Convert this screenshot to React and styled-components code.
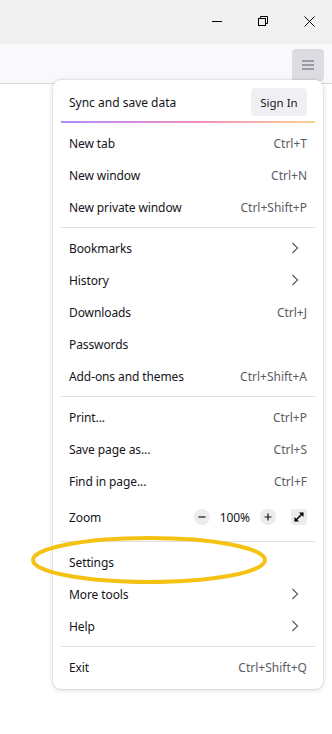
import React from 'react';
import styled, { createGlobalStyle } from 'styled-components';

const GlobalStyle = createGlobalStyle`
  html, body {
    margin: 0;
    padding: 0;
    background: #ffffff;
  }
  body {
    font-family: "Segoe UI", "Noto Sans", "Liberation Sans", sans-serif;
    color: #15141a;
  }
`;

const Page = styled.div`
  position: relative;
  width: 332px;
  height: 734px;
  overflow: hidden;
  background: #fff;
`;

// Window chrome
const TitleBar = styled.div`
  height: 44px;
  background: #f0f0f0;
  display: flex;
  justify-content: flex-end;
`;

const WinButton = styled.div`
  width: 46px;
  height: 42px;
  display: flex;
  align-items: center;
  justify-content: center;
  color: #000;
`;

const Toolbar = styled.div`
  height: 39px;
  background: #f9f9fb;
  border-bottom: 1px solid #d7d7db;
  display: flex;
  justify-content: flex-end;
  align-items: center;
  padding-right: 8px;
`;

const MenuButton = styled.div`
  width: 32px;
  height: 32px;
  border-radius: 4px;
  background: #dcdce2;
  display: flex;
  align-items: center;
  justify-content: center;
  margin-top: 2px;
  color: #5b5b66;
`;

// Popup menu panel, floats over the page
const Panel = styled.div`
  position: absolute;
  top: 80px;
  left: 53px;
  width: 270px;
  box-sizing: border-box;
  background: #fff;
  border-radius: 8px;
  box-shadow: 0 1px 5px rgba(0, 0, 0, 0.18), 0 0 0 1px rgba(0, 0, 0, 0.04);
  padding: 8px 8px 6px;
  font-size: 12px;
`;

const SyncRow = styled.div`
  display: flex;
  align-items: center;
  justify-content: space-between;
  height: 28px;
  padding: 0 8px;
`;

const SignIn = styled.div`
  width: 56px;
  height: 28px;
  border-radius: 4px;
  background: #f0f0f4;
  display: flex;
  align-items: center;
  justify-content: center;
  font-size: 11.5px;
`;

const GradientLine = styled.div`
  height: 2px;
  margin: 5px 0 4px;
  background: linear-gradient(90deg, #9059ff 0%, #e95aa8 52%, #f7be63 100%);
  opacity: 0.7;
`;

const Separator = styled.div`
  height: 1px;
  background: #e0e0e6;
  margin: 4px 0;
`;

const Item = styled.div`
  display: flex;
  align-items: center;
  justify-content: space-between;
  height: ${({ $tall }) => ($tall ? '40px' : '32px')};
  padding: 0 8px;
  letter-spacing: -0.1px;
`;

const Shortcut = styled.span`
  color: #5b5b66;
  letter-spacing: 0;
`;

const Chevron = styled.svg`
  width: 8px;
  height: 12px;
  margin-right: 8px;
`;

const ZoomControls = styled.div`
  display: flex;
  align-items: center;
`;

const RoundBtn = styled.div`
  width: 16px;
  height: 16px;
  border-radius: 50%;
  background: #ececef;
  display: flex;
  align-items: center;
  justify-content: center;
`;

const ZoomValue = styled.span`
  margin: 0 10px;
`;

const FullBtn = styled.div`
  width: 16px;
  height: 16px;
  border-radius: 2px;
  background: #ececef;
  display: flex;
  align-items: center;
  justify-content: center;
  margin-left: 15px;
`;

const Annotation = styled.svg`
  position: absolute;
  left: 29px;
  top: 533px;
  pointer-events: none;
`;

const ChevronIcon = () => (
  <Chevron viewBox="0 0 8 12">
    <path d="M1.5 1 L6.5 6 L1.5 11" fill="none" stroke="#5b5b66" strokeWidth="1.2" />
  </Chevron>
);

const groups = [
  [
    { label: 'New tab', key: 'Ctrl+T' },
    { label: 'New window', key: 'Ctrl+N' },
    { label: 'New private window', key: 'Ctrl+Shift+P' },
  ],
  [
    { label: 'Bookmarks', sub: true },
    { label: 'History', sub: true },
    { label: 'Downloads', key: 'Ctrl+J' },
    { label: 'Passwords' },
    { label: 'Add-ons and themes', key: 'Ctrl+Shift+A' },
  ],
  [
    { label: 'Print...', key: 'Ctrl+P' },
    { label: 'Save page as...', key: 'Ctrl+S' },
    { label: 'Find in page...', key: 'Ctrl+F' },
    { label: 'Zoom', zoom: true },
  ],
  [
    { label: 'Settings' },
    { label: 'More tools', sub: true },
    { label: 'Help', sub: true },
  ],
  [{ label: 'Exit', key: 'Ctrl+Shift+Q' }],
];

function MenuItem({ item }) {
  return (
    <Item $tall={item.zoom}>
      <span>{item.label}</span>
      {item.key && <Shortcut>{item.key}</Shortcut>}
      {item.sub && <ChevronIcon />}
      {item.zoom && (
        <ZoomControls>
          <RoundBtn>
            <svg width="8" height="8" viewBox="0 0 8 8">
              <path d="M0.5 4 H7.5" stroke="#15141a" strokeWidth="1.2" />
            </svg>
          </RoundBtn>
          <ZoomValue>100%</ZoomValue>
          <RoundBtn>
            <svg width="8" height="8" viewBox="0 0 8 8">
              <path d="M0.5 4 H7.5 M4 0.5 V7.5" stroke="#15141a" strokeWidth="1.2" />
            </svg>
          </RoundBtn>
          <FullBtn>
            <svg width="12" height="12" viewBox="0 0 12 12">
              <path d="M2 10 L10 2" stroke="#000" strokeWidth="1.6" />
              <path d="M6 1.5 H10.5 V6 Z" fill="#000" />
              <path d="M1.5 6 V10.5 H6 Z" fill="#000" />
            </svg>
          </FullBtn>
        </ZoomControls>
      )}
    </Item>
  );
}

export default function App() {
  return (
    <Page>
      <GlobalStyle />
      <TitleBar>
        <WinButton>
          <svg width="10" height="10" viewBox="0 0 10 10">
            <path d="M0 5.5 H10" stroke="#000" strokeWidth="1" />
          </svg>
        </WinButton>
        <WinButton>
          <svg width="10" height="10" viewBox="0 0 10 10">
            <rect x="0.5" y="2.5" width="7" height="7" fill="none" stroke="#000" strokeWidth="1" />
            <path d="M2.5 2.5 V0.5 H9.5 V7.5 H7.5" fill="none" stroke="#000" strokeWidth="1" />
          </svg>
        </WinButton>
        <WinButton>
          <svg width="11" height="11" viewBox="0 0 11 11">
            <path d="M0.5 0.5 L10.5 10.5 M10.5 0.5 L0.5 10.5" stroke="#000" strokeWidth="1" />
          </svg>
        </WinButton>
      </TitleBar>
      <Toolbar>
        <MenuButton>
          <svg width="14" height="12" viewBox="0 0 14 12">
            <path d="M1 2 H13 M1 6 H13 M1 10 H13" stroke="#5b5b66" strokeWidth="1.2" />
          </svg>
        </MenuButton>
      </Toolbar>

      <Panel>
        <SyncRow>
          <span>Sync and save data</span>
          <SignIn>Sign In</SignIn>
        </SyncRow>
        <GradientLine />
        {groups.map((group, gi) => (
          <React.Fragment key={gi}>
            {gi > 0 && <Separator />}
            {group.map((item) => (
              <MenuItem key={item.label} item={item} />
            ))}
          </React.Fragment>
        ))}
      </Panel>

      <Annotation width="244" height="54" viewBox="0 0 244 54">
        <ellipse cx="120" cy="27" rx="116" ry="22" fill="none" stroke="#f5c214" strokeWidth="4" />
      </Annotation>
    </Page>
  );
}
